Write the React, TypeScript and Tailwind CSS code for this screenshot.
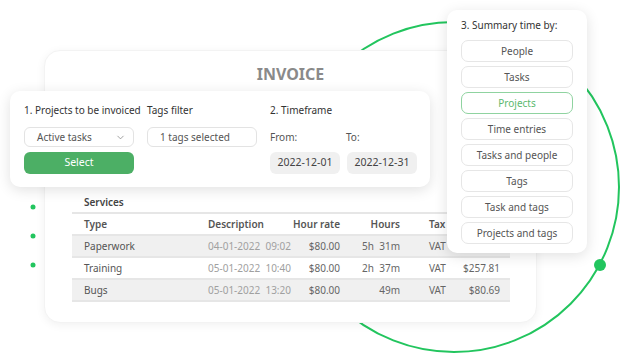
import { ChevronDown } from "lucide-react";

const summaryOptions = [
  "People",
  "Tasks",
  "Projects",
  "Time entries",
  "Tasks and people",
  "Tags",
  "Task and tags",
  "Projects and tags",
];

const rows = [
  { type: "Paperwork", date: "04-01-2022", time: "09:02", rate: "$80.00", hours: "5h  31m", tax: "VAT", amount: "" },
  { type: "Training", date: "05-01-2022", time: "10:40", rate: "$80.00", hours: "2h  37m", tax: "VAT", amount: "$257.81" },
  { type: "Bugs", date: "05-01-2022", time: "13:20", rate: "$80.00", hours: "49m", tax: "VAT", amount: "$80.69" },
];

const cols = "grid grid-cols-[136px_80px_52px_60px_40px_1fr]";

function App() {
  return (
    <div
      className="relative w-[621px] h-[355px] overflow-hidden bg-white text-[#555]"
      style={{ fontFamily: '"Noto Sans", "Open Sans", sans-serif' }}
    >
      {/* 배경 원 + 점 */}
      <svg className="absolute left-0 top-0" width="621" height="355">
        <circle cx="454" cy="187" r="165" fill="none" stroke="#22c55e" strokeWidth="2" />
        <circle cx="600" cy="265" r="6" fill="#22c55e" />
        <circle cx="33" cy="207" r="2.5" fill="#22c55e" />
        <circle cx="33" cy="236" r="2.5" fill="#22c55e" />
        <circle cx="33" cy="265" r="2.5" fill="#22c55e" />
      </svg>

      {/* 인보이스 카드 */}
      <div className="relative ml-[44px] mt-[50px] w-[493px] h-[273px] rounded-[16px] bg-white border border-[#f3f3f3] shadow-[0_2px_10px_rgba(0,0,0,0.06)]">
        <div className="pt-[13px] text-center text-[16px] font-bold leading-[20px] text-[#8a8a8a]">
          INVOICE
        </div>
        <div className="mt-[108px] ml-[27px] mr-[26px] text-[10px]">
          <div className="pl-[12px] h-[20px] flex items-center font-semibold text-[#444]">Services</div>
          <div className={`${cols} items-center h-[22px] border-t-2 border-[#e6e6e6] font-semibold text-[#555]`}>
            <div className="pl-[12px]">Type</div>
            <div>Description</div>
            <div className="text-right">Hour rate</div>
            <div className="text-right">Hours</div>
            <div className="pl-[29px]">Tax</div>
            <div></div>
          </div>
          {rows.map((r, i) => (
            <div
              key={r.type}
              className={`${cols} items-center h-[22px] border-t-2 border-[#e6e6e6] ${
                i % 2 === 0 ? "bg-[#f0f0f0]" : "bg-white"
              }`}
            >
              <div className="pl-[12px] text-[#555]">{r.type}</div>
              <div className="text-[#a0a0a0] whitespace-pre">
                {r.date}  {r.time}
              </div>
              <div className="text-right text-[#666]">{r.rate}</div>
              <div className="text-right text-[#666] whitespace-pre">{r.hours}</div>
              <div className="pl-[29px] text-[#666]">{r.tax}</div>
              <div className="text-right pr-[10px] text-[#666]">{r.amount}</div>
            </div>
          ))}
          <div className="border-t-2 border-[#e6e6e6]"></div>
        </div>
      </div>

      {/* 필터 카드 */}
      <div className="absolute left-[10px] top-[91px] w-[420px] h-[96px] rounded-[10px] bg-white shadow-[0_3px_14px_rgba(0,0,0,0.12)] flex gap-[13px] pl-[14px] pt-[12px] text-[10px]">
        <div className="w-[110px] flex flex-col">
          <div className="h-[14px] leading-[14px] text-[#333] whitespace-nowrap">1. Projects to be invoiced</div>
          <div className="mt-[10px] h-[20px] rounded-[6px] border border-[#e3e3e3] flex items-center justify-between pl-[12px] pr-[7px] text-[#555]">
            <span>Active tasks</span>
            <ChevronDown size={11} strokeWidth={1.5} className="text-[#777]" />
          </div>
          <div className="mt-[5px] h-[22px] rounded-[6px] bg-[#4caf65] flex items-center justify-center text-white text-[10.5px]">
            Select
          </div>
        </div>
        <div className="w-[110px] flex flex-col">
          <div className="h-[14px] leading-[14px] text-[#333]">Tags filter</div>
          <div className="mt-[10px] h-[20px] rounded-[6px] border border-[#e3e3e3] flex items-center pl-[12px] text-[#555]">
            1 tags selected
          </div>
        </div>
        <div className="w-[147px] flex flex-col">
          <div className="h-[14px] leading-[14px] text-[#333]">2. Timeframe</div>
          <div className="mt-[10px] h-[20px] flex items-center text-[#555]">
            <span className="w-[76px]">From:</span>
            <span>To:</span>
          </div>
          <div className="mt-[5px] flex gap-[7px]">
            <div className="w-[70px] h-[22px] rounded-[6px] bg-[#f0f0f0] flex items-center justify-center text-[10.5px] text-[#444]">
              2022-12-01
            </div>
            <div className="w-[70px] h-[22px] rounded-[6px] bg-[#f0f0f0] flex items-center justify-center text-[10.5px] text-[#444]">
              2022-12-31
            </div>
          </div>
        </div>
      </div>

      {/* 요약 패널 */}
      <div className="absolute left-[447px] top-[10px] w-[140px] h-[243px] rounded-[10px] bg-white shadow-[0_3px_14px_rgba(0,0,0,0.12)] px-[14px] pt-[7px] text-[10px]">
        <div className="h-[16px] leading-[16px] text-[#333]">3. Summary time by:</div>
        <div className="mt-[7px] flex flex-col gap-[4px]">
          {summaryOptions.map((o) => (
            <div
              key={o}
              className={`h-[22px] rounded-[7px] border flex items-center justify-center ${
                o === "Projects" ? "border-[#8fd3a0] text-[#5cb96e]" : "border-[#e6e6e6] text-[#555]"
              }`}
            >
              {o}
            </div>
          ))}
        </div>
      </div>
    </div>
  );
}

export default App;
